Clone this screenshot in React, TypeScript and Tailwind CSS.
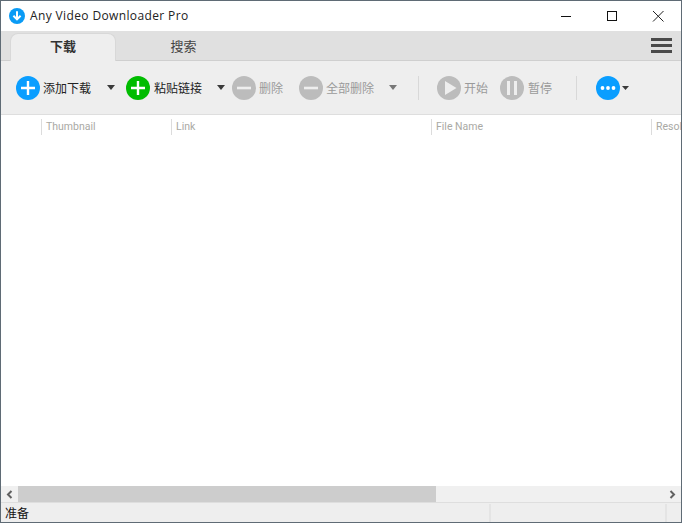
import React from "react";

const FONT = '"Noto Sans CJK SC", sans-serif';

function Circle({ color, kind }: { color: string; kind: "plus" | "minus" | "play" | "pause" | "dots" }) {
  return (
    <svg width="24" height="24" viewBox="0 0 24 24" className="shrink-0">
      <circle cx="12" cy="12" r="12" fill={color} />
      {kind === "plus" && <path d="M12 5v14M5 12h14" stroke="#fff" strokeWidth="2.4" />}
      {kind === "minus" && <path d="M5 12h14" stroke="#eee" strokeWidth="2.6" />}
      {kind === "play" && <path d="M8 5 19.5 12 8 19z" fill="#eee" />}
      {kind === "pause" && <path d="M8.5 5v14M15.5 5v14" stroke="#eee" strokeWidth="3" />}
      {kind === "dots" && (
        <g fill="#fff">
          <circle cx="6.5" cy="12" r="1.9" />
          <circle cx="12" cy="12" r="1.9" />
          <circle cx="17.5" cy="12" r="1.9" />
        </g>
      )}
    </svg>
  );
}

function Caret({ color = "#3a3a3a", w = 8, h = 5 }: { color?: string; w?: number; h?: number }) {
  return (
    <svg width={w} height={h} viewBox="0 0 8 5" preserveAspectRatio="none" className="shrink-0">
      <path d="M0 0h8L4 5z" fill={color} />
    </svg>
  );
}

function Btn({ kind, color, label, dim, className, gap }: { kind: "plus" | "minus" | "play" | "pause"; color: string; label: string; dim?: boolean; className: string; gap?: string }) {
  return (
    <div className={`flex items-center shrink-0 ${gap ?? "gap-[3px]"} ${className}`}>
      <Circle color={color} kind={kind} />
      <span className={`text-[12px] leading-none ${dim ? "text-[#9a9a9a]" : "text-[#222]"}`}>{label}</span>
    </div>
  );
}

function Col({ label, className }: { label: string; className: string }) {
  return (
    <div className={`shrink-0 h-[16px] border-l border-[#dcdcdc] pl-1 text-[10.5px] leading-[15px] text-[#a9a9a4] whitespace-nowrap ${className}`}>
      {label}
    </div>
  );
}

export default function App() {
  return (
    <div
      className="w-[682px] h-[523px] flex flex-col border border-[#5f6b75] bg-white overflow-hidden"
      style={{ fontFamily: FONT }}
    >
      {/* Title bar */}
      <div className="h-[30px] shrink-0 flex items-center bg-white">
        <svg width="16" height="16" viewBox="0 0 16 16" className="ml-[8px] shrink-0">
          <circle cx="8" cy="8" r="8" fill="#0a9bf5" />
          <path d="M8 3.2v8M4.4 7.8 8 11.4l3.6-3.6" stroke="#fff" strokeWidth="2" fill="none" />
        </svg>
        <span className="ml-[5px] text-[12px] tracking-[0.37px] text-[#222]" style={{ fontFamily: '"Open Sans", sans-serif' }}>
          Any Video Downloader Pro
        </span>
        <div className="ml-auto flex items-center">
          <svg width="46" height="30" viewBox="0 0 46 30"><path d="M18 15.5h10" stroke="#111" /></svg>
          <svg width="46" height="30" viewBox="0 0 46 30"><rect x="18.5" y="10.5" width="9" height="9" fill="none" stroke="#111" /></svg>
          <svg width="46" height="30" viewBox="0 0 46 30"><path d="M18 10l10.5 10.5M28.5 10 18 20.5" stroke="#222" /></svg>
        </div>
      </div>

      {/* Tab bar */}
      <div className="h-[30px] shrink-0 flex items-end bg-[#e0e0e0] border-b border-[#cfcfcf] pl-[9px] relative">
        <div className="w-[106px] h-[28px] -mb-px pb-[3px] bg-[#eeeeee] rounded-t-[8px] border border-b-0 border-[#d8d8d8] flex items-center justify-center text-[13px] font-bold text-[#333]">
          下载
        </div>
        <div className="w-[135px] h-[27px] pb-[2px] flex items-center justify-center text-[13px] text-[#444]">搜索</div>
        <div className="ml-auto mr-[9px] mb-[7px] w-[21px] flex flex-col gap-[3px]">
          <div className="h-[3px] bg-[#4a4a4a]" />
          <div className="h-[3px] bg-[#4a4a4a]" />
          <div className="h-[3px] bg-[#4a4a4a]" />
        </div>
      </div>

      {/* Toolbar */}
      <div className="h-[54px] shrink-0 flex items-center bg-[#eeeeee] border-b border-[#dedede] pl-[15px]">
        <Btn kind="plus" color="#0a9eff" label="添加下载" className="w-[91px]" />
        <Caret />
        <div className="w-[11px]" />
        <Btn kind="plus" color="#00bc00" label="粘贴链接" gap="gap-[4px]" className="w-[91px]" />
        <Caret />
        <div className="w-[7px]" />
        <Btn kind="minus" color="#bcbcbc" label="删除" dim className="w-[67px]" />
        <Btn kind="minus" color="#bcbcbc" label="全部删除" dim className="w-[90px]" />
        <Caret color="#777" />
        <div className="w-[21px]" />
        <div className="w-px h-[24px] bg-[#d8d8d8]" />
        <div className="w-[18px]" />
        <Btn kind="play" color="#bcbcbc" label="开始" dim className="w-[63px]" />
        <Btn kind="pause" color="#bcbcbc" label="暂停" dim gap="gap-[4px]" className="w-[76px]" />
        <div className="w-px h-[24px] bg-[#d8d8d8]" />
        <div className="w-[19px]" />
        <Circle color="#0a9eff" kind="dots" />
        <div className="w-[2px]" />
        <Caret w={7} h={4} />
      </div>

      {/* Table */}
      <div className="flex-1 min-h-0 bg-white overflow-hidden">
        <div className="flex pt-[4px] pl-[40px]" style={{ fontFamily: 'Roboto, sans-serif' }}>
          <Col label="Thumbnail" className="w-[130px]" />
          <Col label="Link" className="w-[260px]" />
          <Col label="File Name" className="w-[220px]" />
          <Col label="Resolution" className="w-[30px] overflow-hidden" />
        </div>
      </div>

      {/* Scrollbar */}
      <div className="h-[16px] shrink-0 flex items-stretch bg-[#f0f0f0]">
        <div className="w-[17px] flex items-center justify-center">
          <svg width="7" height="9" viewBox="0 0 7 9"><path d="M5.5 1 2 4.5 5.5 8" stroke="#606060" strokeWidth="2" fill="none" /></svg>
        </div>
        <div className="w-[418px] bg-[#cdcdcd]" />
        <div className="ml-auto w-[17px] flex items-center justify-center">
          <svg width="7" height="9" viewBox="0 0 7 9"><path d="M1.5 1 5 4.5 1.5 8" stroke="#606060" strokeWidth="2" fill="none" /></svg>
        </div>
      </div>

      {/* Status bar */}
      <div className="h-[20px] shrink-0 flex items-stretch bg-[#eeeeee] border-t border-[#dedede] text-[12px] text-[#111]">
        <div className="w-[488px] pl-[4px] leading-[19px]">准备</div>
        <div className="w-[176px] border-l-2 border-[#e4e4e4] mt-[1px]" />
        <div className="flex-1 border-l-2 border-[#e4e4e4] mt-[1px]" />
      </div>
    </div>
  );
}
